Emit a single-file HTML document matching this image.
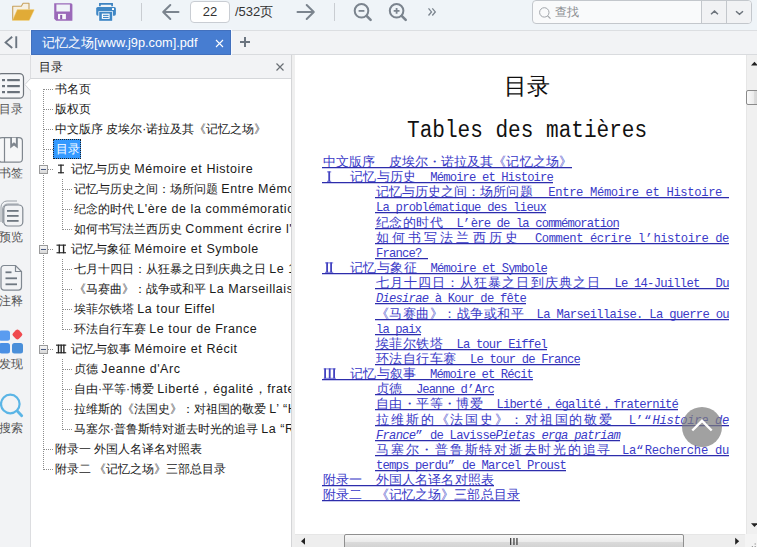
<!DOCTYPE html>
<html><head><meta charset="utf-8">
<style>
*{margin:0;padding:0;box-sizing:border-box}
html,body{width:757px;height:547px;overflow:hidden;background:#fff;font-family:"Liberation Sans",sans-serif;position:relative}
.a{position:absolute}
#toolbar{left:0;top:0;width:757px;height:31px;background:#eff4f8;border-bottom:1px solid #dcdee1}
#tabbar{left:0;top:31px;width:757px;height:24px;background:#f2f3f5;border-bottom:1px solid #d9dbde}
#tab{left:31px;top:30px;width:200px;height:25px;background:#477dd1;border:1px solid #4270bd;color:#fff;font-size:12.75px;box-shadow:0 0 0 1px #f4f8ff}
#side{left:0;top:55px;width:31px;height:492px;background:#f2f3f5;border-right:1px solid #dcdde0}
#tochead{left:31px;top:55px;width:261px;height:24px;background:#f2f3f5;border-bottom:1px solid #d5d7da}
#split{left:291px;top:55px;width:4px;height:492px;background:#efefef;border-left:1px solid #d4d5d7}
#pdf{left:295px;top:55px;width:451px;height:479px;background:#fff}
#vscroll{left:746px;top:55px;width:11px;height:479px;background:#f0f0f0;border-left:1px solid #e6e6e6}
#hscroll{left:295px;top:534px;width:451px;height:13px;background:#eeeeee;border-top:1px solid #e6e6e6}
#corner{left:745px;top:534px;width:12px;height:13px;background:#f4f4f4}
.lbl{font-size:12px;color:#555}
.toc{font-size:12px;color:#1a1a1a;white-space:nowrap;line-height:20px;height:20px}
.tl{font-size:12.5px;letter-spacing:.55px}
.pln{white-space:pre;line-height:15px;height:15px;color:#3a3ac8;font-family:"Liberation Mono",monospace;font-size:12px;--ls:0px}
.pc{font-size:12.6px;letter-spacing:calc(var(--ls) + .5px);position:relative;top:2px}
.pl{font-family:"Liberation Mono",monospace;font-size:12.2px;letter-spacing:calc(var(--ls) - .77px);position:relative;top:2px}
.pi{font-family:"Liberation Mono",monospace;font-size:12.2px;font-style:italic;letter-spacing:calc(var(--ls) - .77px);position:relative;top:2px}
</style></head><body>
<div id="toolbar" class="a">
<svg class="a" style="left:0;top:0" width="757" height="30" viewBox="0 0 757 30">
<!-- folder -->
<path d="M12.7 20.3V6.3h8.6l1.8-3h5.9v6.4" fill="#f6f0e2" stroke="#c7a15c" stroke-width="1.1" stroke-linejoin="round"/>
<path d="M17.2 9.6h16.6q.6 0 .3.6l-4.6 9.8q-.3.5-.9.5H12.9q-.5 0-.3-.5z" fill="#e1ab37" stroke="#f3d98e" stroke-width=".5"/>
<!-- save -->
<path d="M54.2 3.2h16.6q1.6 0 1.6 1.6v16H56.2l-2-2z" fill="#9b69b9"/>
<rect x="56.4" y="4.5" width="13.5" height="7" fill="#f0f4f8"/>
<rect x="58" y="13.9" width="7.9" height="5.3" fill="#f7f8fb"/>
<rect x="60.2" y="14.9" width="2" height="4.3" fill="#8a5aa8"/>
<!-- printer -->
<path d="M99.9 6.2V3.9H112.1V6.2" fill="none" stroke="#3d82c0" stroke-width="1.7"/>
<rect x="96.2" y="7" width="19.7" height="8.7" rx="1.6" fill="#3f87c5"/>
<rect x="112" y="8.1" width="2" height="1.9" fill="#fff"/>
<rect x="98.4" y="11.3" width="14.6" height="10" fill="#f2f9ff"/>
<rect x="99.2" y="12" width="13" height="8.8" fill="#3f87c5"/>
<rect x="101.8" y="13.6" width="7.8" height="5.3" fill="#fff"/>
<rect x="103" y="14.8" width="5.6" height="1.1" fill="#3f87c5"/>
<rect x="103" y="16.9" width="5.6" height="1.1" fill="#3f87c5"/>
<!-- separators -->
<rect x="141" y="3" width="1" height="18" fill="#c9cdd2"/>
<rect x="334" y="3" width="1" height="18" fill="#c9cdd2"/>
<!-- left arrow -->
<path d="M178.5 12H163.5M170.3 5L163.2 12l7.1 7" fill="none" stroke="#7b848e" stroke-width="2" stroke-linecap="round" stroke-linejoin="round"/>
<!-- right arrow -->
<path d="M297.5 12H313.5M306.7 5L313.8 12l-7.1 7" fill="none" stroke="#7b848e" stroke-width="2" stroke-linecap="round" stroke-linejoin="round"/>
<!-- zoom out -->
<circle cx="361.5" cy="10.8" r="6.8" fill="none" stroke="#7b848e" stroke-width="2"/>
<path d="M366.6 15.9l4 4" stroke="#7b848e" stroke-width="2.6" stroke-linecap="round"/>
<path d="M358.6 10.9h5.8" stroke="#7b848e" stroke-width="1.8"/>
<!-- zoom in -->
<circle cx="396.6" cy="10.8" r="6.8" fill="none" stroke="#7b848e" stroke-width="2"/>
<path d="M401.7 15.9l4 4" stroke="#7b848e" stroke-width="2.6" stroke-linecap="round"/>
<path d="M393.7 10.9h5.8M396.6 8v5.8" stroke="#7b848e" stroke-width="1.8"/>
<!-- >> -->
<path d="M428.5 8.3l3 3.6-3 3.6M432.3 8.3l3 3.6-3 3.6" fill="none" stroke="#7b848e" stroke-width="1.3"/>
</svg>
<div class="a" style="left:190px;top:1px;width:40px;height:22px;background:#fff;border:1px solid #c9cdd3;border-radius:4px;font-size:13px;color:#333;text-align:center;line-height:20px">22</div>
<div class="a" style="left:235px;top:1px;height:22px;font-size:13px;color:#333;line-height:22px">/532页</div>
<div class="a" style="left:532px;top:0px;width:220px;height:24px;background:#f9fafb;border:1px solid #c3c7cc;border-radius:4px;overflow:hidden">
 <svg class="a" style="left:0;top:0" width="220" height="24"><circle cx="11.3" cy="11.4" r="4.7" fill="none" stroke="#a2a6ab" stroke-width="1"/><path d="M14.6 14.8l2.9 2.9" stroke="#a2a6ab" stroke-width="1.2"/></svg>
 <div class="a" style="left:22px;top:0;line-height:22px;font-size:12px;color:#8a8d91">查找</div>
 <div class="a" style="left:168px;top:-1px;width:25px;height:24px;background:#f1f2f4;border-left:1px solid #c3c7cc"></div>
 <div class="a" style="left:193px;top:-1px;width:27px;height:24px;background:#f1f2f4;border-left:1px solid #c3c7cc"></div>
 <svg class="a" style="left:0;top:0" width="220" height="24"><path d="M178 13.2l3.5-3.1 3.5 3.1M203 10.2l3.5 3.1 3.5-3.1" fill="none" stroke="#6d747c" stroke-width="1.5"/></svg>
</div>
</div>
<div id="tabbar" class="a"></div>
<div id="tab" class="a"><div class="a" style="left:10px;top:3px;line-height:17px;white-space:nowrap">记忆之场[www.j9p.com].pdf</div>
<svg class="a" style="left:182.5px;top:7.5px" width="9" height="9"><path d="M1 1l7 7M8 1l-7 7" stroke="#fff" stroke-width="1.1"/></svg></div>
<svg class="a" style="left:0;top:31px" width="260" height="24">
<path d="M12.2 5.8L5.6 11.4 12.2 17" fill="none" stroke="#6c7580" stroke-width="1.9"/><rect x="15.3" y="5.3" width="1.9" height="11.8" fill="#6c7580"/>
<path d="M240 11h10M245 6v10" stroke="#6c7580" stroke-width="2"/>
</svg>
<div id="side" class="a"></div>
<svg class="a" style="left:0;top:55px" width="31" height="400" viewBox="0 55 31 400">
<!-- toc active -->
<rect x="-2.5" y="73.6" width="26" height="24.6" rx="4" fill="#f5f6f8" stroke="#6e747b" stroke-width="1.2"/>
<path d="M31.5 78.3L24.9 84.6 31.5 90.9z" fill="#fff"/><path d="M30.6 78.3L24.9 84.6 30.6 90.9" fill="none" stroke="#d3d5d8" stroke-width="1"/>
<rect x="2" y="79" width="3" height="2.2" fill="#6a727b"/><rect x="7.2" y="79" width="12.6" height="2.2" fill="#6a727b"/>
<rect x="2" y="85" width="3" height="2.2" fill="#6a727b"/><rect x="7.2" y="85" width="12.6" height="2.2" fill="#6a727b"/>
<rect x="2" y="91" width="3" height="2.2" fill="#6a727b"/><rect x="7.2" y="91" width="12.6" height="2.2" fill="#6a727b"/>
<!-- bookmark -->
<rect x="-1.4" y="137.6" width="23.8" height="24.6" rx="3.5" fill="#f6f7f8" stroke="#80878f" stroke-width="1.2"/>
<path d="M4.5 137.6V162.2" stroke="#80878f" stroke-width="1.2"/>
<path d="M10.2 137.2H17.8V148.6L14 145.4 10.2 148.6Z" fill="#80878f"/>
<path d="M12 137.8H15.9V143.8L13.95 142.3 12 143.8Z" fill="#f6f7f8"/>
<!-- preview -->
<path d="M1 222V207a6 6 0 0 1 6-6h10" fill="none" stroke="#9aa0a7" stroke-width="1"/>
<path d="M2.6 223V209a5 5 0 0 1 5-5h11" fill="none" stroke="#9aa0a7" stroke-width="1"/>
<rect x="3.8" y="205" width="19" height="21" rx="4" fill="none" stroke="#808891" stroke-width="1.2"/>
<rect x="7" y="210" width="11.6" height="1.8" fill="#6f7881"/><rect x="7" y="215" width="11.6" height="1.8" fill="#6f7881"/><rect x="7" y="220" width="11.6" height="1.8" fill="#6f7881"/>
<!-- note -->
<path d="M4 265.5h11.5l6 6v15.6a3 3 0 0 1-3 3H4a3 3 0 0 1-3-3V268.5a3 3 0 0 1 3-3z" fill="none" stroke="#808891" stroke-width="1.2"/>
<path d="M15.5 265.5v6h6" fill="none" stroke="#808891" stroke-width="1.2"/>
<rect x="5.5" y="271.4" width="6" height="1.8" fill="#6f7881"/><rect x="5.5" y="277.4" width="11.5" height="1.8" fill="#6f7881"/><rect x="5.5" y="283.4" width="11.5" height="1.8" fill="#6f7881"/>
<!-- discover -->
<rect x="-1" y="330.4" width="11" height="10.4" rx="2.5" fill="#5a9cf0"/>
<rect x="13.3" y="330.4" width="8.2" height="8.2" rx="2.2" fill="#f0494e" transform="rotate(45 17.4 334.5)"/>
<rect x="-1" y="343" width="11" height="10.4" rx="2.5" fill="#4a8fe4"/>
<rect x="12" y="343" width="11" height="10.4" rx="2.5" fill="#4a8fd9"/>
<!-- search -->
<circle cx="10.3" cy="404" r="9.3" fill="none" stroke="#5bb5e6" stroke-width="2.2"/>
<path d="M17.5 411.3l4.2 4.4" stroke="#5bb5e6" stroke-width="2.8" stroke-linecap="round"/>
</svg>
<div class="a lbl" style="left:-1px;top:102px;line-height:14px">目录</div>
<div class="a lbl" style="left:-1px;top:166px;line-height:14px">书签</div>
<div class="a lbl" style="left:-1px;top:230px;line-height:14px">预览</div>
<div class="a lbl" style="left:-1px;top:294px;line-height:14px">注释</div>
<div class="a lbl" style="left:-1px;top:357px;line-height:14px">发现</div>
<div class="a lbl" style="left:-1px;top:421px;line-height:14px">搜索</div>

<div id="tochead" class="a"><div class="a" style="left:7.5px;top:5px;font-size:12px;color:#1a1a1a;line-height:14px">目录</div>
<svg class="a" style="left:244px;top:7px" width="10" height="10"><path d="M1.5 1.5l7 7M8.5 1.5l-7 7" stroke="#6a6f75" stroke-width="1.2"/></svg></div>
<div class="a" style="left:31px;top:79px;width:260px;height:468px;overflow:hidden;background:#fff">
<svg class="a" style="left:0;top:0" width="260" height="468" shape-rendering="crispEdges"><path d="M12.5 10V391" stroke="#8c8c8c" stroke-width="1" stroke-dasharray="1 1"/><path d="M13 10.5H22" stroke="#8c8c8c" stroke-width="1" stroke-dasharray="1 1"/><path d="M13 30.5H22" stroke="#8c8c8c" stroke-width="1" stroke-dasharray="1 1"/><path d="M13 50.5H22" stroke="#8c8c8c" stroke-width="1" stroke-dasharray="1 1"/><path d="M13 70.5H22" stroke="#8c8c8c" stroke-width="1" stroke-dasharray="1 1"/><path d="M17 90.5H22" stroke="#8c8c8c" stroke-width="1" stroke-dasharray="1 1"/><path d="M32 110.5H41" stroke="#8c8c8c" stroke-width="1" stroke-dasharray="1 1"/><path d="M32 130.5H41" stroke="#8c8c8c" stroke-width="1" stroke-dasharray="1 1"/><path d="M32 150.5H41" stroke="#8c8c8c" stroke-width="1" stroke-dasharray="1 1"/><path d="M17 170.5H22" stroke="#8c8c8c" stroke-width="1" stroke-dasharray="1 1"/><path d="M32 190.5H41" stroke="#8c8c8c" stroke-width="1" stroke-dasharray="1 1"/><path d="M32 210.5H41" stroke="#8c8c8c" stroke-width="1" stroke-dasharray="1 1"/><path d="M32 230.5H41" stroke="#8c8c8c" stroke-width="1" stroke-dasharray="1 1"/><path d="M32 250.5H41" stroke="#8c8c8c" stroke-width="1" stroke-dasharray="1 1"/><path d="M17 270.5H22" stroke="#8c8c8c" stroke-width="1" stroke-dasharray="1 1"/><path d="M32 290.5H41" stroke="#8c8c8c" stroke-width="1" stroke-dasharray="1 1"/><path d="M32 310.5H41" stroke="#8c8c8c" stroke-width="1" stroke-dasharray="1 1"/><path d="M32 330.5H41" stroke="#8c8c8c" stroke-width="1" stroke-dasharray="1 1"/><path d="M32 350.5H41" stroke="#8c8c8c" stroke-width="1" stroke-dasharray="1 1"/><path d="M13 370.5H22" stroke="#8c8c8c" stroke-width="1" stroke-dasharray="1 1"/><path d="M13 390.5H22" stroke="#8c8c8c" stroke-width="1" stroke-dasharray="1 1"/><path d="M31.5 100V151" stroke="#8c8c8c" stroke-width="1" stroke-dasharray="1 1"/><path d="M31.5 180V251" stroke="#8c8c8c" stroke-width="1" stroke-dasharray="1 1"/><path d="M31.5 280V351" stroke="#8c8c8c" stroke-width="1" stroke-dasharray="1 1"/><rect x="8.5" y="85.5" width="8" height="8" fill="url(#bg)" stroke="#9a9a9a" transform="translate(0 .5)"/><path d="M10 90.5H15" stroke="#4a5a80"/><rect x="8.5" y="165.5" width="8" height="8" fill="url(#bg)" stroke="#9a9a9a" transform="translate(0 .5)"/><path d="M10 170.5H15" stroke="#4a5a80"/><rect x="8.5" y="265.5" width="8" height="8" fill="url(#bg)" stroke="#9a9a9a" transform="translate(0 .5)"/><path d="M10 270.5H15" stroke="#4a5a80"/><defs><linearGradient id="bg" x1="0" y1="0" x2="0" y2="1"><stop offset="0" stop-color="#fbfbfb"/><stop offset="1" stop-color="#d8d8d8"/></linearGradient></defs></svg>
<svg class="a" style="left:0;top:0" width="260" height="468"><rect x="27" y="85.6" width="6" height="1.1" fill="#222"/><rect x="27" y="93.2" width="6" height="1.1" fill="#222"/><rect x="29.299999999999997" y="85.6" width="1.35" height="8.700000000000006" fill="#222"/><rect x="25.5" y="165.6" width="9.5" height="1.1" fill="#222"/><rect x="25.5" y="173.2" width="9.5" height="1.1" fill="#222"/><rect x="27.6" y="165.6" width="1.35" height="8.700000000000006" fill="#222"/><rect x="31.9" y="165.6" width="1.35" height="8.700000000000006" fill="#222"/><rect x="25" y="265.6" width="10.200000000000003" height="1.1" fill="#222"/><rect x="25" y="273.2" width="10.200000000000003" height="1.1" fill="#222"/><rect x="26.799999999999997" y="265.6" width="1.35" height="8.699999999999978" fill="#222"/><rect x="29.5" y="265.6" width="1.35" height="8.699999999999978" fill="#222"/><rect x="32.2" y="265.6" width="1.35" height="8.699999999999978" fill="#222"/></svg>
<div class="a toc" style="left:24px;top:0px">书名页</div>
<div class="a toc" style="left:24px;top:20px">版权页</div>
<div class="a toc" style="left:24px;top:40px">中文版序 皮埃尔·诺拉及其《记忆之场》</div>
<div class="a" style="left:22px;top:60px;width:28px;height:20px;background:#3399ff;outline:1px dotted #222;outline-offset:-1px"></div>
<div class="a toc" style="left:25px;top:60px;color:#fff">目录</div>
<div class="a toc" style="left:40px;top:80px">记忆与历史 <span class="tl">Mémoire et Histoire</span></div>
<div class="a toc" style="left:43px;top:100px">记忆与历史之间：场所问题 <span class="tl">Entre Mémoire et Histoire</span></div>
<div class="a toc" style="left:43px;top:120px">纪念的时代 <span class="tl">L'ère de la commémoration</span></div>
<div class="a toc" style="left:43px;top:140px">如何书写法兰西历史 <span class="tl">Comment écrire l'histoire</span></div>
<div class="a toc" style="left:40px;top:160px">记忆与象征 <span class="tl">Mémoire et Symbole</span></div>
<div class="a toc" style="left:43px;top:180px">七月十四日：从狂暴之日到庆典之日 <span class="tl">Le 14-Juillet</span></div>
<div class="a toc" style="left:43px;top:200px">《马赛曲》：战争或和平 <span class="tl">La Marseillaise</span></div>
<div class="a toc" style="left:43px;top:220px">埃菲尔铁塔 <span class="tl">La tour Eiffel</span></div>
<div class="a toc" style="left:43px;top:240px">环法自行车赛 <span class="tl">Le tour de France</span></div>
<div class="a toc" style="left:40px;top:260px">记忆与叙事 <span class="tl">Mémoire et Récit</span></div>
<div class="a toc" style="left:43px;top:280px">贞德 <span class="tl">Jeanne d'Arc</span></div>
<div class="a toc" style="left:43px;top:300px">自由·平等·博爱 <span class="tl">Liberté，égalité，fraternité</span></div>
<div class="a toc" style="left:43px;top:320px">拉维斯的《法国史》：对祖国的敬爱 <span class="tl">L’ “Histoire</span></div>
<div class="a toc" style="left:43px;top:340px">马塞尔·普鲁斯特对逝去时光的追寻 <span class="tl">La “Recherche</span></div>
<div class="a toc" style="left:24px;top:360px">附录一 外国人名译名对照表</div>
<div class="a toc" style="left:24px;top:380px">附录二 《记忆之场》三部总目录</div>
</div>
<div id="split" class="a"></div>
<div id="pdf" class="a"></div>
<div class="a" style="left:504px;top:72px;font-size:23px;line-height:28px;color:#111;font-weight:500;white-space:nowrap">目录</div>
<div class="a" style="left:407px;top:116px;font-family:'Liberation Mono',monospace;font-size:23.5px;line-height:30px;color:#111;white-space:nowrap;transform:scaleX(.896);transform-origin:0 0">Tables des matières</div>
<div class="a pln" id="L0_0" style="left:323px;top:154px;--ls:-0.395px"><span class="pc">中文版序　皮埃尔・诺拉及其《记忆之场》</span></div>
<div class="a" style="left:322px;top:167px;width:250px;height:1px;background:#2d2daa;box-shadow:0 1px 0 rgba(70,70,200,.3)"></div>
<div class="a pln" id="L1_0" style="left:323px;top:169px;--ls:-0.087px"><span class="pc">　　记忆与历史　</span><span class="pl">Mémoire et Histoire</span></div>
<div class="a" style="left:322px;top:182px;width:231px;height:1px;background:#2d2daa;box-shadow:0 1px 0 rgba(70,70,200,.3)"></div>
<div class="a pln" id="L2_0" style="left:376px;top:184px;--ls:-0.45px"><span class="pc">记忆与历史之间：场所问题</span></div>
<div class="a pln" id="L2_1" style="left:548.3px;top:184px;--ls:0.406px"><span class="pl">Entre Mémoire et Histoire </span></div>
<div class="a" style="left:375px;top:197px;width:354px;height:1px;background:#2d2daa;box-shadow:0 1px 0 rgba(70,70,200,.3)"></div>
<div class="a pln" id="L3_0" style="left:376px;top:199px;--ls:-0.005px"><span class="pl">La problématique des lieux</span></div>
<div class="a" style="left:375px;top:212px;width:171px;height:1px;background:#2d2daa;box-shadow:0 1px 0 rgba(70,70,200,.3)"></div>
<div class="a pln" id="L4_0" style="left:376px;top:215px;--ls:-0.101px"><span class="pc">纪念的时代　</span><span class="pl">L</span><span class="pc">’</span><span class="pl">ère de la commémoration</span></div>
<div class="a" style="left:375px;top:228px;width:244px;height:1px;background:#2d2daa;box-shadow:0 1px 0 rgba(70,70,200,.3)"></div>
<div class="a pln" id="L5_0" style="left:376px;top:230px;--ls:2.6px"><span class="pc">如何书写法兰西历史</span></div>
<div class="a pln" id="L5_1" style="left:535px;top:230px;--ls:0.33px"><span class="pl">Comment écrire l</span><span class="pc">’</span><span class="pl">histoire de</span></div>
<div class="a" style="left:375px;top:243px;width:354px;height:1px;background:#2d2daa;box-shadow:0 1px 0 rgba(70,70,200,.3)"></div>
<div class="a pln" id="L6_0" style="left:376px;top:245px;--ls:-0.045px"><span class="pl">France? </span></div>
<div class="a" style="left:375px;top:258px;width:53px;height:1px;background:#2d2daa;box-shadow:0 1px 0 rgba(70,70,200,.3)"></div>
<div class="a pln" id="L7_0" style="left:323px;top:260px;--ls:-0.069px"><span class="pc">　　记忆与象征　</span><span class="pl">Mémoire et Symbole</span></div>
<div class="a" style="left:322px;top:273px;width:225px;height:1px;background:#2d2daa;box-shadow:0 1px 0 rgba(70,70,200,.3)"></div>
<div class="a pln" id="L8_0" style="left:376px;top:275px;--ls:0.55px"><span class="pc">七月十四日：从狂暴之日到庆典之日</span></div>
<div class="a pln" id="L8_1" style="left:614.4px;top:275px;--ls:0.001px"><span class="pl">Le 14-Juillet</span></div>
<div class="a pln" id="L8_2" style="left:715.4px;top:275px;--ls:0.251px"><span class="pl">Du</span></div>
<div class="a" style="left:375px;top:288px;width:354px;height:1px;background:#2d2daa;box-shadow:0 1px 0 rgba(70,70,200,.3)"></div>
<div class="a pln" id="L9_0" style="left:376px;top:290px;--ls:-0.022px"><span class="pi">Diesirae</span><span class="pl"> à Kour de fête</span></div>
<div class="a" style="left:375px;top:303px;width:151px;height:1px;background:#2d2daa;box-shadow:0 1px 0 rgba(70,70,200,.3)"></div>
<div class="a pln" id="L10_0" style="left:376px;top:306px;--ls:-0.047px"><span class="pc">《马赛曲》：战争或和平</span></div>
<div class="a pln" id="L10_1" style="left:536.6px;top:306px;--ls:0.09px"><span class="pl">La Marseillaise. La guerre ou</span></div>
<div class="a" style="left:375px;top:319px;width:354px;height:1px;background:#2d2daa;box-shadow:0 1px 0 rgba(70,70,200,.3)"></div>
<div class="a pln" id="L11_0" style="left:376px;top:321px;--ls:-0.116px"><span class="pl">la paix</span></div>
<div class="a" style="left:375px;top:334px;width:46px;height:1px;background:#2d2daa;box-shadow:0 1px 0 rgba(70,70,200,.3)"></div>
<div class="a pln" id="L12_0" style="left:376px;top:336px;--ls:-0.081px"><span class="pc">埃菲尔铁塔　</span><span class="pl">La tour Eiffel</span></div>
<div class="a" style="left:375px;top:349px;width:172px;height:1px;background:#2d2daa;box-shadow:0 1px 0 rgba(70,70,200,.3)"></div>
<div class="a pln" id="L13_0" style="left:376px;top:351px;--ls:-0.074px"><span class="pc">环法自行车赛　</span><span class="pl">Le tour de France</span></div>
<div class="a" style="left:375px;top:364px;width:205px;height:1px;background:#2d2daa;box-shadow:0 1px 0 rgba(70,70,200,.3)"></div>
<div class="a pln" id="L14_0" style="left:323px;top:366px;--ls:-0.113px"><span class="pc">　　记忆与叙事　</span><span class="pl">Mémoire et Récit</span></div>
<div class="a" style="left:322px;top:379px;width:211px;height:1px;background:#2d2daa;box-shadow:0 1px 0 rgba(70,70,200,.3)"></div>
<div class="a pln" id="L15_0" style="left:376px;top:381px;--ls:-0.172px"><span class="pc">贞德　</span><span class="pl">Jeanne d</span><span class="pc">’</span><span class="pl">Arc</span></div>
<div class="a" style="left:375px;top:394px;width:119px;height:1px;background:#2d2daa;box-shadow:0 1px 0 rgba(70,70,200,.3)"></div>
<div class="a pln" id="L16_0" style="left:376px;top:396px;--ls:-0.103px"><span class="pc">自由・平等・博爱　</span><span class="pl">Liberté</span><span class="pc">，</span><span class="pl">égalité</span><span class="pc">，</span><span class="pl">fraternité</span></div>
<div class="a" style="left:375px;top:409px;width:303px;height:1px;background:#2d2daa;box-shadow:0 1px 0 rgba(70,70,200,.3)"></div>
<div class="a pln" id="L17_0" style="left:376px;top:412px;--ls:1.375px"><span class="pc">拉维斯的《法国史》：对祖国的敬爱</span></div>
<div class="a pln" id="L17_1" style="left:628.7px;top:412px;--ls:0.403px"><span class="pl">L</span><span class="pc">’“</span><span class="pi">Histoire de</span></div>
<div class="a" style="left:375px;top:425px;width:354px;height:1px;background:#2d2daa;box-shadow:0 1px 0 rgba(70,70,200,.3)"></div>
<div class="a pln" id="L18_0" style="left:376px;top:427px;--ls:0.01px"><span class="pi">France</span><span class="pc">”</span><span class="pl"> de Lavisse</span><span class="pi">Pietas erga patriam</span></div>
<div class="a" style="left:375px;top:440px;width:245px;height:1px;background:#2d2daa;box-shadow:0 1px 0 rgba(70,70,200,.3)"></div>
<div class="a pln" id="L19_0" style="left:376px;top:442px;--ls:1.25px"><span class="pc">马塞尔・普鲁斯特对逝去时光的追寻</span></div>
<div class="a pln" id="L19_1" style="left:622px;top:442px;--ls:0.488px"><span class="pl">La</span><span class="pc">“</span><span class="pl">Recherche du</span></div>
<div class="a" style="left:375px;top:455px;width:354px;height:1px;background:#2d2daa;box-shadow:0 1px 0 rgba(70,70,200,.3)"></div>
<div class="a pln" id="L20_0" style="left:376px;top:457px;--ls:-0.045px"><span class="pl">temps perdu</span><span class="pc">”</span><span class="pl"> de Marcel Proust</span></div>
<div class="a" style="left:375px;top:470px;width:191px;height:1px;background:#2d2daa;box-shadow:0 1px 0 rgba(70,70,200,.3)"></div>
<div class="a pln" id="L21_0" style="left:323px;top:472px;--ls:-0.347px"><span class="pc">附录一　外国人名译名对照表</span></div>
<div class="a" style="left:322px;top:485px;width:172px;height:1px;background:#2d2daa;box-shadow:0 1px 0 rgba(70,70,200,.3)"></div>
<div class="a pln" id="L22_0" style="left:323px;top:487px;--ls:-0.367px"><span class="pc">附录二　《记忆之场》三部总目录</span></div>
<div class="a" style="left:322px;top:500px;width:198px;height:1px;background:#2d2daa;box-shadow:0 1px 0 rgba(70,70,200,.3)"></div>
<svg class="a" style="left:0;top:0" width="757" height="547"><rect x="327" y="171.4" width="4.199999999999989" height="1" fill="#7070d8"/><rect x="327" y="180.8" width="4.199999999999989" height="1" fill="#7070d8"/><rect x="328.3" y="171.4" width="1.8" height="10" fill="#4242c0"/><rect x="325" y="262.4" width="8.199999999999989" height="1" fill="#7070d8"/><rect x="325" y="271.8" width="8.199999999999989" height="1" fill="#7070d8"/><rect x="326.20000000000005" y="262.4" width="1.8" height="10" fill="#4242c0"/><rect x="330.20000000000005" y="262.4" width="1.8" height="10" fill="#4242c0"/><rect x="323.6" y="368.4" width="12.199999999999989" height="1" fill="#7070d8"/><rect x="323.6" y="377.8" width="12.199999999999989" height="1" fill="#7070d8"/><rect x="324.20000000000005" y="368.4" width="1.8" height="10" fill="#4242c0"/><rect x="328.8" y="368.4" width="1.8" height="10" fill="#4242c0"/><rect x="333.20000000000005" y="368.4" width="1.8" height="10" fill="#4242c0"/></svg>
<div id="vscroll" class="a"></div>
<div id="hscroll" class="a"></div>
<div id="corner" class="a"></div>
<svg class="a" style="left:295px;top:55px" width="462" height="492" viewBox="295 55 462 492">
<defs>
<linearGradient id="vt" x1="0" y1="0" x2="1" y2="0"><stop offset="0" stop-color="#fbfbfb"/><stop offset=".5" stop-color="#ececec"/><stop offset=".55" stop-color="#dcdcdc"/><stop offset="1" stop-color="#cfcfcf"/></linearGradient>
<linearGradient id="ht" x1="0" y1="0" x2="0" y2="1"><stop offset="0" stop-color="#f8f8f8"/><stop offset=".45" stop-color="#ebebeb"/><stop offset=".5" stop-color="#dadada"/><stop offset="1" stop-color="#cdcdcd"/></linearGradient>
</defs>
<path d="M754.5 61.8L758 65.6H751z" fill="#222"/>
<rect x="746.5" y="90.5" width="14" height="14" rx="1.5" fill="url(#vt)" stroke="#8a8a8a"/>
<path d="M751 523.2H758L754.5 527z" fill="#222"/>
<path d="M301 541.3L305 537.8V544.8z" fill="#222"/>
<rect x="344.5" y="534.5" width="339" height="16" rx="1.5" fill="url(#ht)" stroke="#8f8f8f"/>
<rect x="510" y="538" width="1.3" height="7" fill="#444"/><rect x="513.3" y="538" width="1.3" height="7" fill="#444"/><rect x="516.3" y="538" width="1.3" height="7" fill="#444"/>
<path d="M739.2 541.2L735.2 537.7V544.7z" fill="#222"/>
<rect x="754.6" y="543.4" width="1.2" height="1.2" fill="#9a9a9a"/><rect x="751.8" y="546" width="1.2" height="1" fill="#9a9a9a"/><rect x="754.6" y="546" width="1.2" height="1" fill="#9a9a9a"/>
<circle cx="702" cy="427" r="20" fill="rgba(125,125,125,.72)"/>
<path d="M692.3 430.5L702 420.8 711.7 430.5" fill="none" stroke="#fff" stroke-width="2.4"/>
</svg>
</body></html>
